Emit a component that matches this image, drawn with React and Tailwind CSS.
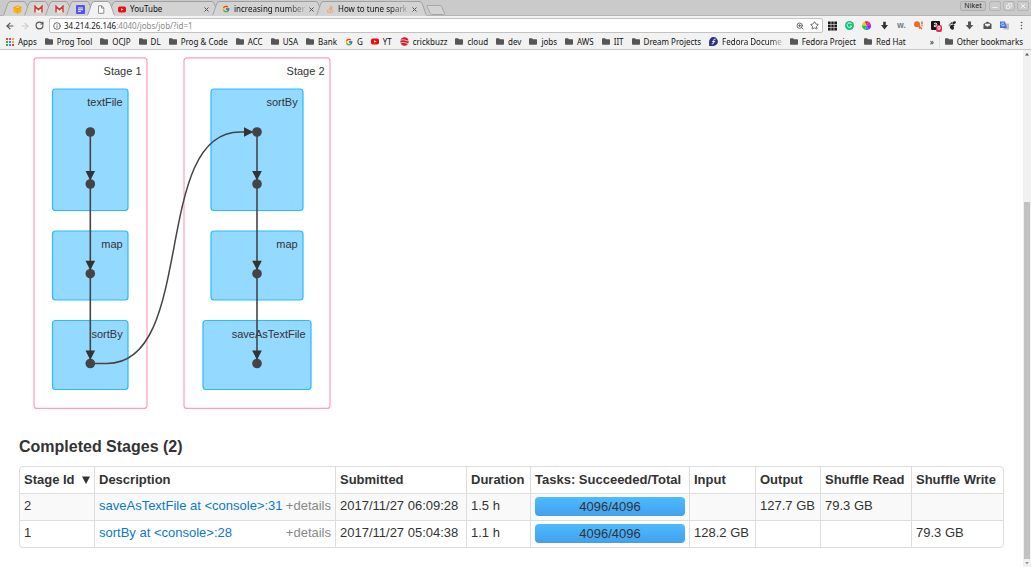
import React from "react";
import { FaStackOverflow } from "react-icons/fa";
import { FcGoogle } from "react-icons/fc";
import { ArrowLeft, ArrowRight, RotateCw, Info, ZoomIn, Star } from "lucide-react";

function Gmail() {
  return (
    <svg viewBox="0 0 9 8" className="h-2 w-[9px]" aria-hidden="true">
      <rect x="0.5" y="0.5" width="8" height="7" fill="#f3e9e9" />
      <path d="M1 7.5V1.2L4.5 4.6L8 1.2V7.5" fill="none" stroke="#d93a35" strokeWidth="1.5" />
    </svg>
  );
}

function Cube() {
  return (
    <svg viewBox="0 0 9 9" className="size-[9px]" aria-hidden="true">
      <path d="M0.5 2L4.5 0.3L8.5 2V7L4.5 8.8L0.5 7Z" fill="#f6b21b" />
      <path d="M0.5 2.2L4.5 3.8L8.5 2.2M4.5 3.8V8.6" fill="none" stroke="#e59c12" strokeWidth="0.7" />
      <path d="M2.5 2.2L4.5 1.4L6.5 2.2L4.5 3Z" fill="#fbd36a" />
    </svg>
  );
}

function Notes() {
  return (
    <svg viewBox="0 0 9 9" className="size-[9px]" aria-hidden="true">
      <rect width="9" height="9" rx="1" fill="#5353f0" />
      <path d="M2 3H7M2 4.7H7M2 6.4H5" stroke="#fff" strokeWidth="0.9" />
    </svg>
  );
}

function Page() {
  return (
    <svg viewBox="0 0 8 9" className="h-[9px] w-2" aria-hidden="true">
      <path d="M1.5 0.8H4.7L6.8 2.9V8.3H1.5Z M4.5 0.8V3.1H6.8" fill="#fff" stroke="#777" strokeWidth="0.8" />
    </svg>
  );
}

function YouTubeIcon() {
  return (
    <svg viewBox="0 0 9 7" className="h-[7px] w-2 shrink-0" aria-hidden="true">
      <rect width="9" height="7" rx="2" fill="#f00b0b" />
      <path d="M3.5 2L6.2 3.5L3.5 5Z" fill="#fff" />
    </svg>
  );
}

function CrickIcon() {
  return (
    <svg viewBox="0 0 9 9" className="size-[9px] shrink-0" aria-hidden="true">
      <circle cx="4.5" cy="4.5" r="4.2" fill="#cf1f24" />
      <path d="M0 3.4Q3 2 6 3.4T9 3M0 6Q3 4.6 6 6T9 5.6" fill="none" stroke="#f4dcdc" strokeWidth="0.8" />
    </svg>
  );
}

function FedoraIcon() {
  return (
    <svg viewBox="0 0 9 9" className="size-[9px] shrink-0" aria-hidden="true">
      <path d="M4.5 0.1A4.4 4.4 0 1 1 4.5 8.9H0.1V4.5A4.4 4.4 0 0 1 4.5 0.1Z" fill="#29347a" />
      <path d="M6.6 2.2Q4.7 1.5 4.7 3.4V5.7Q4.6 7.2 2.7 6.9M3 4.6H6.2" fill="none" stroke="#fff" strokeWidth="0.9" />
    </svg>
  );
}

function AppsIcon() {
  const colors = ["#e04a3f", "#e04a3f", "#f0a93c", "#3aa757", "#4a7ee0", "#f0a93c", "#3aa757", "#4a7ee0", "#e04a3f"];
  return (
    <svg viewBox="0 0 8 8" className="size-2 shrink-0" aria-hidden="true">
      {colors.map((c, i) => (
        <rect key={i} x={(i % 3) * 3} y={Math.floor(i / 3) * 3} width="2" height="2" fill={c} />
      ))}
    </svg>
  );
}

function Folder() {
  return (
    <svg viewBox="0 0 8 7" className="h-[7px] w-2 shrink-0" aria-hidden="true">
      <path d="M0 1Q0 0.3 0.7 0.3H3L4 1.3H7.4Q8 1.3 8 2V6Q8 6.7 7.3 6.7H0.7Q0 6.7 0 6Z" fill="#565656" />
    </svg>
  );
}

function Tab({ icon, title, active, fade }) {
  const fill = active ? "#f2f2f2" : "#d3d3d3";
  return (
    <div className={`relative -mr-[7px] flex h-4 shrink-0 ${active ? "z-10" : ""} ${title ? "w-[111px]" : "w-7"}`}>
      <svg viewBox="0 0 7 16" className="h-4 w-[7px] shrink-0" aria-hidden="true">
        <path d="M0 16C2 15 4 1 7 1V16Z" fill={fill} />
        <path d="M0 15.5C2 14.5 4 1.5 7 1.5" fill="none" stroke="#a0a0a0" />
      </svg>
      <button
        aria-label={title ?? "Pinned tab"}
        className={`mt-px flex min-w-0 flex-1 items-center border-t border-[#a0a0a0] ${active ? "bg-[#f2f2f2]" : "bg-[#d3d3d3]"} ${title ? "gap-1 pr-[3px] pl-[3px]" : "justify-center"}`}
      >
        {icon}
        {title && (
          <span
            className={`shrink-0 text-left text-[8px] leading-3 whitespace-nowrap text-[#111] ${fade ? "[mask-image:linear-gradient(to_right,#000_75%,#0003)]" : ""}`}
          >
            {title}
          </span>
        )}
        {title && (
          <svg viewBox="0 0 5 5" className="ml-auto size-[5px] shrink-0" aria-hidden="true">
            <path d="M0.5 0.5L4.5 4.5M4.5 0.5L0.5 4.5" stroke="#555" />
          </svg>
        )}
      </button>
      <svg viewBox="0 0 7 16" className="h-4 w-[7px] shrink-0" aria-hidden="true">
        <path d="M0 1C3 1 5 15 7 16H0Z" fill={fill} />
        <path d="M0 1.5C3 1.5 5 14.5 7 15.5" fill="none" stroke="#a0a0a0" />
      </svg>
    </div>
  );
}

function TabStrip() {
  return (
    <div className="flex h-4 items-start justify-between border-b border-[#b4b4b4] bg-[#cacaca]">
      <div className="flex pl-[3px]">
        <Tab icon={<Cube />} />
        <Tab icon={<Gmail />} />
        <Tab icon={<Gmail />} />
        <Tab icon={<Notes />} />
        <Tab icon={<Page />} active />
        <Tab icon={<YouTubeIcon />} title="YouTube" />
        <Tab icon={<FcGoogle className="size-2 shrink-0" />} title="increasing number" fade />
        <Tab icon={<FaStackOverflow className="size-2 shrink-0 text-[#ee9a5c]" />} title="How to tune spark" fade />
        <button aria-label="New tab" className="mt-1 ml-[6px]">
          <svg viewBox="0 0 20 10" className="h-[10px] w-5">
            <path d="M1 0.5H14Q15 0.5 15.5 1.5L18.5 8Q19 9.5 17.5 9.5H6Q5 9.5 4.5 8.5L1 1.5Z" fill="#d3d3d3" stroke="#a8a8a8" />
          </svg>
        </button>
      </div>
      <div className="flex gap-[2px] pt-px pr-[2px]">
        <button className="mr-px h-[10px] w-[26px] rounded-xs border border-[#adadad] bg-[#c4c4c4] text-[7px] leading-2 text-[#222]">Niket</button>
        <button aria-label="Minimize" className="h-[10px] w-3 rounded-xs border border-[#b4b4b4]">
          <svg viewBox="0 0 10 8"><path d="M2.5 5.5H7.5" stroke="#f0f0f0" /></svg>
        </button>
        <button aria-label="Restore" className="h-[10px] w-3 rounded-xs border border-[#b4b4b4]">
          <svg viewBox="0 0 10 8"><path d="M2.5 3.5H5.5V6.5H2.5ZM4.5 3V1.5H7.5V5H6" fill="none" stroke="#f0f0f0" strokeWidth="0.8" /></svg>
        </button>
        <button aria-label="Close" className="h-[10px] w-3 rounded-xs border border-[#b4b4b4]">
          <svg viewBox="0 0 10 8"><path d="M3 2L7 6M7 2L3 6" stroke="#f0f0f0" /></svg>
        </button>
      </div>
    </div>
  );
}

const extensions = [
  ["Grid", <g key="g"><rect width="9" height="9" y="0.5" fill="#1c1c1c" /><path d="M3 0V9.5M6 0V9.5M0 3.5H9M0 6.5H9" stroke="#f2f2f2" strokeWidth="0.6" /></g>],
  ["Grammar", <g key="g"><circle cx="4.5" cy="4.5" r="4.5" fill="#15c37f" /><path d="M6.5 3A2.3 2.3 0 1 0 6.7 5H5" fill="none" stroke="#fff" strokeWidth="0.9" /></g>],
  ["Color picker", <g key="g"><path d="M4.5 4.5L2.6 0.6A4.5 4.5 0 0 1 6.4 0.6Z" fill="#ee2020" /><path d="M4.5 4.5L6.4 0.6A4.5 4.5 0 0 1 9 4Z" fill="#e828b8" /><path d="M4.5 4.5L9 4A4.5 4.5 0 0 1 6.8 8.4Z" fill="#7a28e8" /><path d="M4.5 4.5L6.8 8.4A4.5 4.5 0 0 1 3 8.8Z" fill="#2790ee" /><path d="M4.5 4.5L3 8.8A4.5 4.5 0 0 1 0 4.3Z" fill="#30c030" /><path d="M4.5 4.5L0 4.3A4.5 4.5 0 0 1 2.6 0.6Z" fill="#f2c020" /></g>],
  ["Download", <path key="g" d="M3.2 0.8H5.8V4H8L4.5 8.5L1 4H3.2Z" fill="#333" />],
  ["Wiki", <text key="g" x="0" y="6.7" fontSize="8" fontWeight="700" fill="#6d8192">w.</text>],
  ["Key", <g key="g"><circle cx="3" cy="3.2" r="3" fill="#f36b21" /><path d="M4.5 4.5L8 8M6 6L5 7.5" stroke="#f36b21" strokeWidth="1.6" /><path d="M8 0.5V3.5M8 4.3V5.3" stroke="#e83a21" strokeWidth="1.2" /></g>],
  ["Shopping", <g key="g"><rect width="9" height="9" rx="1" fill="#181818" /><path d="M3 2.5Q5.8 1.2 5.8 3.2V6M5.6 4Q3 3.8 3 5.2Q4 6.4 5.7 4.8" fill="none" stroke="#fff" strokeWidth="0.9" /></g>],
  ["Foot", <g key="g" fill="#222"><ellipse cx="6.2" cy="1.7" rx="1.9" ry="1.3" transform="rotate(-30 6.2 1.7)" /><path d="M1.8 5Q3 3.4 5.2 3.4Q7.4 3.8 6 5Q4.6 5.6 6 6.4Q6.4 8.8 4.4 8.8Q1.8 8.2 1.8 5Z" /><circle cx="3.7" cy="2.1" r="0.8" /><circle cx="2.3" cy="2.9" r="0.7" /><circle cx="1.2" cy="4.1" r="0.6" /></g>],
  ["Save", <path key="g" d="M3 0.5H6V4H8.3L4.5 8.5L0.7 4H3Z" fill="#555" />],
  ["Mail", <g key="g"><path d="M0.5 3L4.5 0.5L8.5 3V8H0.5Z" fill="#555" /><path d="M2 2.8H7V4.3L4.5 5.8L2 4.3Z" fill="#f2f2f2" /></g>],
  ["Translate", <g key="g"><rect x="3.5" y="2.5" width="5.5" height="6" fill="#b9bcc4" /><path d="M0 0.5H5L7 7H0Z" fill="#4a6fe0" /><path d="M4.2 2.6A1.5 1.5 0 1 0 4.3 4H3.2" fill="none" stroke="#fff" strokeWidth="0.7" /></g>],
  ["Menu", <g key="g" fill="#555"><circle cx="4.5" cy="1.5" r="0.8" /><circle cx="4.5" cy="4.5" r="0.8" /><circle cx="4.5" cy="7.5" r="0.8" /></g>],
];

function AddressBar() {
  return (
    <div className="flex h-[18px] items-center pt-px pr-[5px] pl-1">
      <div className="flex w-11 items-center justify-between pr-1 pl-px text-[#555]">
        <button aria-label="Back"><ArrowLeft className="size-[10px]" strokeWidth={2.8} /></button>
        <button aria-label="Forward" className="text-[#ccc]"><ArrowRight className="size-[10px]" strokeWidth={2.8} /></button>
        <button aria-label="Reload"><RotateCw className="size-[9px]" strokeWidth={3.2} /></button>
      </div>
      <div className="ml-px flex h-[15px] flex-1 items-center gap-[3px] rounded-xs border border-[#c2c2c2] bg-white px-[3px] text-[#555]">
        <Info className="size-2 shrink-0" strokeWidth={2.6} />
        <div className="min-w-0 flex-1 text-[8px] leading-3 whitespace-nowrap text-[#888]">
          <span className="text-[#111]">34.214.26.146</span>:4040/jobs/job/?id=1
        </div>
        <button aria-label="Zoom" className="mr-[3px]"><ZoomIn className="size-2" strokeWidth={2.6} /></button>
        <button aria-label="Bookmark this page"><Star className="size-[9px]" strokeWidth={2.4} /></button>
      </div>
      <div className="ml-[5px] flex w-[198px] shrink-0 items-center justify-between">
        {extensions.map(([name, art]) => (
          <button key={name} aria-label={name} className="relative">
            <svg viewBox="0 0 9 9" className="size-[9px] overflow-visible">{art}</svg>
            {name === "Shopping" && (
              <span className="absolute top-1 left-[5px] h-[7px] w-[6px] rounded-xs bg-[#e8254d] text-center text-[6px] leading-[7px] font-bold text-white">9</span>
            )}
          </button>
        ))}
      </div>
    </div>
  );
}

const bookmarks = [
  ["Apps", <AppsIcon />], ["Prog Tool"], ["OCJP"], ["DL"], ["Prog & Code"], ["ACC"], ["USA"], ["Bank"],
  ["G", <FcGoogle className="size-2 shrink-0" />], ["YT", <YouTubeIcon />], ["crickbuzz", <CrickIcon />],
  ["cloud"], ["dev"], ["jobs"], ["AWS"], ["IIT"], ["Dream Projects"], ["Fedora Docume", <FedoraIcon />],
  ["Fedora Project"], ["Red Hat"],
];

function BookmarkBar() {
  return (
    <nav className="flex h-4 items-center justify-between border-b border-[#c8c8c8] px-[6px] text-[8px] leading-3 whitespace-nowrap text-[#111]">
      <div className="flex items-center gap-2">
        {bookmarks.map(([label, icon]) => (
          <a key={label} href="#" className="flex items-center gap-1">
            {icon ?? <Folder />}
            <span className={label === "Fedora Docume" ? "[mask-image:linear-gradient(to_right,#000_80%,#0003)]" : ""}>{label}</span>
          </a>
        ))}
      </div>
      <div className="flex items-center gap-[5px] pr-[2px]">
        <span>»</span>
        <span className="h-3 w-px bg-[#ddd]" />
        <a href="#" className="flex items-center gap-1"><Folder />Other bookmarks</a>
      </div>
    </nav>
  );
}

const operations = [
  { label: "textFile", x: 52.5, y: 89, w: 75.5, h: 121.5 },
  { label: "map", x: 52.5, y: 231, w: 75.5, h: 69 },
  { label: "sortBy", x: 52.5, y: 320.5, w: 75.5, h: 69 },
  { label: "sortBy", x: 211, y: 89, w: 92, h: 121.5 },
  { label: "map", x: 211, y: 231, w: 92, h: 69 },
  { label: "saveAsTextFile", x: 203, y: 320.5, w: 108, h: 69 },
];
const stages = [
  { label: "Stage 1", x: 34, w: 113 },
  { label: "Stage 2", x: 184, w: 146 },
];
const nodeRows = [132, 184, 273.7, 363.5];
const nodeColumns = [90.3, 257];

function StageGraph() {
  return (
    <svg viewBox="19 50 312 370" className="block h-[370px] w-[312px]" role="img" aria-label="Job stages" fontFamily='"Liberation Sans", Arial, sans-serif' fontSize="11" fill="#333">
      {stages.map((s) => (
        <g key={s.label}>
          <rect x={s.x} y="57.8" width={s.w} height="350.6" rx="3" fill="#fff" stroke="#ff9dbd" strokeWidth="1.2" />
          <text x={s.x + s.w - 5.5} y="75" textAnchor="end">{s.label}</text>
        </g>
      ))}
      {operations.map((o, i) => (
        <g key={i}>
          <rect x={o.x} y={o.y} width={o.w} height={o.h} rx="3" fill="#94d9ff" stroke="#29bbff" strokeWidth="1.2" />
          <text x={o.x + o.w - 5.3} y={o.y + 17} textAnchor="end">{o.label}</text>
        </g>
      ))}
      {nodeColumns.map((x) => (
        <g key={x}>
          <path d={`M${x} 132V363`} stroke="#444" strokeWidth="1.6" />
          {nodeRows.map((y) => (
            <circle key={y} cx={x} cy={y} r="4.8" fill="#444" />
          ))}
          {nodeRows.slice(1).map((y) => (
            <path key={y} d={`M${x - 4.8} ${y - 12.9}H${x + 4.8}L${x} ${y - 3.5}Z`} fill="#333" />
          ))}
        </g>
      ))}
      <path d="M90.3 363.5H107C197 363.5 151 132 240 132H246" fill="none" stroke="#444" strokeWidth="1.5" />
      <path d="M244 127.3V136.7L253.4 132Z" fill="#333" />
    </svg>
  );
}

const columns = [
  ["Stage Id", "w-[74px]"], ["Description", "w-[241px]"], ["Submitted", "w-[131px]"], ["Duration", "w-16"],
  ["Tasks: Succeeded/Total", "w-[159px]"], ["Input", "w-[66px]"], ["Output", "w-[65px]"], ["Shuffle Read", "w-[91px]"],
  ["Shuffle Write", ""],
];
const rows = [
  ["2", "saveAsTextFile at <console>:31", "2017/11/27 06:09:28", "1.5 h", "4096/4096", "", "127.7 GB", "79.3 GB", ""],
  ["1", "sortBy at <console>:28", "2017/11/27 05:04:38", "1.1 h", "4096/4096", "128.2 GB", "", "", "79.3 GB"],
];

function cell(value, i) {
  if (i === 1)
    return (
      <div className="flex justify-between">
        <a href="#" className="text-[#0a78cc]">{value}</a>
        <button className="text-[#888]">+details</button>
      </div>
    );
  if (i === 4)
    return (
      <div className="h-[19px] rounded-sm bg-linear-to-b from-[#4cbcff] to-[#449fed] text-center leading-[19px]">{value}</div>
    );
  return value;
}

function StagesTable() {
  return (
    <table className="w-full table-fixed border-separate border-spacing-0 rounded border border-[#ddd] text-left text-[13px] leading-[18px] whitespace-nowrap text-[#333]">
      <thead>
        <tr className="h-[26px]">
          {columns.map(([name, width], i) => (
            <th key={name} className={`px-1 font-bold ${width} ${i ? "border-l border-[#ddd]" : ""}`}>
              {name}
              {i === 0 && (
                <svg viewBox="0 0 8 8" className="ml-[7px] inline-block size-2 align-baseline" aria-hidden="true">
                  <path d="M0 0.5H8L4 8Z" fill="#333" />
                </svg>
              )}
            </th>
          ))}
        </tr>
      </thead>
      <tbody>
        {rows.map((r) => (
          <tr key={r[0]} className="h-[27px] odd:bg-[#f9f9f9]">
            {r.map((v, i) => (
              <td key={i} className={`border-t border-[#ddd] px-1 pt-0 pb-[2px] ${i ? "border-l" : ""}`}>{cell(v, i)}</td>
            ))}
          </tr>
        ))}
      </tbody>
    </table>
  );
}

function Scrollbar() {
  return (
    <div className="flex w-2 shrink-0 flex-col items-center bg-[#f1f1f1]" aria-hidden="true">
      <svg viewBox="0 0 8 8" className="size-2"><path d="M2 5.5L4 3L6 5.5Z" fill="#555" /></svg>
      <div className="flex-[144]" />
      <div className="w-[6px] flex-[357] bg-[#c1c1c1]" />
      <svg viewBox="0 0 8 8" className="size-2"><path d="M2 3L4 5.5L6 3Z" fill="#999" /></svg>
    </div>
  );
}

export default function App() {
  return (
    <div className="flex h-screen flex-col bg-white font-['Liberation_Sans',Arial,sans-serif]">
      <header className="shrink-0 bg-[#f2f2f2] font-['Noto_Sans',sans-serif]">
        <TabStrip />
        <AddressBar />
        <BookmarkBar />
      </header>
      <div className="flex min-h-0 flex-1">
        <main className="min-w-0 flex-1 overflow-hidden px-[19px]">
          <StageGraph />
          <h4 className="pt-[17px] pb-[9px] text-[16px] leading-5 font-bold text-[#333]">Completed Stages (2)</h4>
          <StagesTable />
        </main>
        <Scrollbar />
      </div>
    </div>
  );
}
